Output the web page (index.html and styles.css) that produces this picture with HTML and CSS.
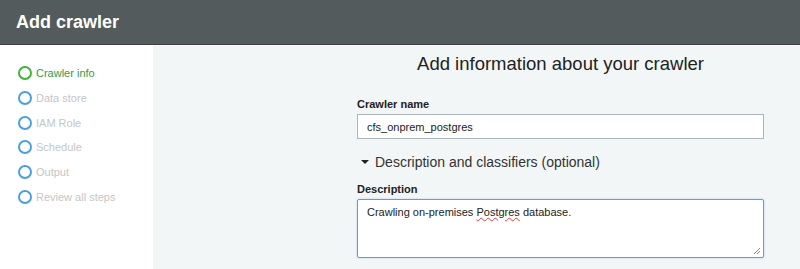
FILE: index.html
```html
<!DOCTYPE html>
<html lang="en">
<head>
<meta charset="UTF-8">
<meta name="viewport" content="width=device-width, initial-scale=1.0">
<title>Add crawler</title>
<link rel="stylesheet" href="styles.css">
</head>
<body>
<div class="header">
    <h1>Add crawler</h1>
</div>
<div class="page">
    <div class="sidebar">
        <div class="step active"><span class="dot"></span>Crawler info</div>
        <div class="step"><span class="dot"></span>Data store</div>
        <div class="step"><span class="dot"></span>IAM Role</div>
        <div class="step"><span class="dot"></span>Schedule</div>
        <div class="step"><span class="dot"></span>Output</div>
        <div class="step"><span class="dot"></span>Review all steps</div>
    </div>
    <div class="main">
        <div class="form">
            <h2>Add information about your crawler</h2>
            <label class="label">Crawler name</label>
            <div class="input">cfs_onprem_postgres</div>
            <div class="toggle"><span class="caret"></span>Description and classifiers (optional)</div>
            <label class="label">Description</label>
            <div class="textarea">
                Crawling on-premises <span class="misspelled">Postgres</span> database.
                <svg class="grip" width="8" height="8" viewBox="0 0 8 8">
                    <path d="M7 1 L1 7 M7 4 L4 7" stroke="#888" stroke-width="1" fill="none"/>
                </svg>
            </div>
        </div>
    </div>
</div>
</body>
</html>
```

FILE: styles.css
```css
body {
    margin: 0;
    font-family: "Liberation Sans", Arial, sans-serif;
    background-color: #f2f6f6;
}

.header {
    height: 44px;
    background-color: #545b5c;
    border-bottom: 1px solid #3d4343;
    display: flex;
    align-items: center;
    padding-left: 16px;
}

.header h1 {
    margin: 0;
    color: #fff;
    font-size: 18px;
    font-weight: bold;
}

.page {
    display: flex;
    height: 224px;
}

.sidebar {
    width: 153px;
    background-color: #fff;
    padding-top: 16px;
}

.step {
    display: flex;
    align-items: center;
    height: 24.7px;
    padding-left: 18px;
    font-size: 11px;
    color: #c4c6c6;
}

.dot {
    width: 10px;
    height: 10px;
    border: 2px solid #4a9fe0;
    border-radius: 50%;
    margin-right: 4px;
}

.step.active {
    color: #2e9c4c;
}

.step.active .dot {
    border-color: #3db53a;
}

.main {
    flex: 1;
    padding-left: 204px;
}

.form {
    width: 407px;
}

.form h2 {
    margin: 8px 0 23px;
    text-align: center;
    font-size: 18.5px;
    font-weight: normal;
    color: #222;
}

.label {
    display: block;
    font-size: 11px;
    font-weight: bold;
    color: #222;
    margin-bottom: 4px;
}

.label + .textarea {
    margin-top: 1px;
}

.input {
    height: 23px;
    border: 1px solid #aab7b8;
    background-color: #fff;
    font-size: 11px;
    color: #222;
    padding-left: 9px;
    display: flex;
    align-items: center;
}

.toggle {
    display: flex;
    align-items: center;
    font-size: 14px;
    color: #333;
    margin: 15px 0 13px;
}

.caret {
    width: 0;
    height: 0;
    border-left: 4px solid transparent;
    border-right: 4px solid transparent;
    border-top: 4px solid #222;
    margin: 0 6px 0 4px;
}

.textarea {
    position: relative;
    height: 51px;
    border: 1px solid #5b9fe8;
    border-radius: 2px;
    box-shadow: 0 0 2px #a8cdf5;
    background-color: #fff;
    font-size: 11px;
    color: #222;
    padding: 6px 9px 0;
}

.misspelled {
    text-decoration: underline wavy #e03c3c;
    text-decoration-thickness: 1px;
}

.grip {
    position: absolute;
    right: 2px;
    bottom: 2px;
}
```
